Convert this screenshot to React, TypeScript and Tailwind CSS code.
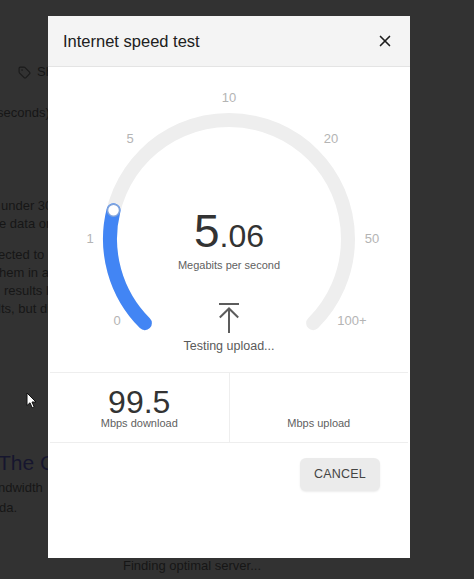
import React from "react";
import { Tag, X } from "lucide-react";

const CX = 181;
const CY = 172;
const R = 119;

// point on the gauge ring, angle in svg degrees (clockwise from +x)
const pt = (deg: number) => {
  const a = (deg * Math.PI) / 180;
  return [CX + R * Math.cos(a), CY + R * Math.sin(a)];
};

const Gauge = () => {
  const [sx, sy] = pt(135);
  const [ex, ey] = pt(405);
  const [kx, ky] = pt(194);

  const labels = [
    { t: "10", x: 181, y: 30 },
    { t: "5", x: 82, y: 71 },
    { t: "20", x: 283, y: 71 },
    { t: "1", x: 42, y: 171 },
    { t: "50", x: 324, y: 171 },
    { t: "0", x: 69, y: 253 },
    { t: "100+", x: 304, y: 253 },
  ];

  return (
    <svg className="absolute inset-0" width="362" height="305" viewBox="0 0 362 305">
      <path
        d={`M ${sx} ${sy} A ${R} ${R} 0 1 1 ${ex} ${ey}`}
        fill="none"
        stroke="#eeeeee"
        strokeWidth="14"
        strokeLinecap="round"
      />
      <path
        d={`M ${sx} ${sy} A ${R} ${R} 0 0 1 ${kx} ${ky}`}
        fill="none"
        stroke="#4285f4"
        strokeWidth="14"
        strokeLinecap="round"
      />
      <circle cx={kx} cy={ky} r="6" fill="#ffffff" stroke="#7fa3dc" strokeWidth="1.5" />
      {labels.map((l) => (
        <text
          key={l.t}
          x={l.x}
          y={l.y}
          textAnchor="middle"
          dominantBaseline="central"
          fontSize="13"
          fill="#b4b4b4"
          fontFamily="'Liberation Sans', Arial, sans-serif"
        >
          {l.t}
        </text>
      ))}
    </svg>
  );
};

const Cursor = () => (
  <svg width="12" height="17" viewBox="0 0 12 17" className="ml-[26px]">
    <path
      d="M1 1 L1 13.5 L4 10.8 L6.2 15.8 L8.2 14.9 L6 10 L10 10 Z"
      fill="#ffffff"
      stroke="#111111"
      strokeWidth="1"
      strokeLinejoin="round"
    />
  </svg>
);

export default function App() {
  return (
    <div className="relative w-[474px] h-[579px] overflow-hidden bg-[#323232] font-['Liberation_Sans',Arial,sans-serif]">
      {/* page behind the dialog */}
      <div className="flex flex-col text-[13px] text-[#161616] whitespace-nowrap">
        <div className="mt-[63px] h-[18px] flex items-center gap-[6px] ml-[18px]">
          <Tag size={13} strokeWidth={2} className="text-[#1a1a1a]" />
          <span>Share</span>
        </div>
        <p className="mt-[23px] h-[18px] leading-[18px] -ml-[3px]">seconds)</p>
        <p className="mt-[75px] h-[18px] leading-[18px] ml-[1px]">under 30 seconds</p>
        <p className="h-[18px] leading-[18px] -ml-[1px]">e data on</p>
        <p className="mt-[13px] h-[18px] leading-[18px] -ml-[2px]">ected to</p>
        <p className="h-[18px] leading-[18px] -ml-[1px]">hem in a</p>
        <p className="h-[18px] leading-[18px] ml-[4px]">results li</p>
        <p className="h-[18px] leading-[18px] -ml-[2px]">lts, but di</p>
        <div className="mt-[74px] h-[16px]">
          <Cursor />
        </div>
        <p className="mt-[42px] h-[26px] leading-[26px] text-[21px] text-[#16162e] -ml-[2px]">The Gl</p>
        <p className="mt-[3px] h-[18px] leading-[18px] -ml-[2px]">ndwidth</p>
        <p className="mt-[2px] h-[18px] leading-[18px] -ml-[1px]">da.</p>
        <p className="mt-[40px] h-[18px] leading-[18px] ml-[123px]">Finding optimal server...</p>
      </div>

      {/* dialog */}
      <div className="absolute left-[48px] top-[16px] w-[362px] h-[542px] bg-white flex flex-col">
        <div className="h-[51px] shrink-0 bg-[#f4f4f4] border-b border-[#e4e4e4] flex items-center justify-between pl-[15px] pr-[16px]">
          <span className="text-[16.5px] text-[#202020]">Internet speed test</span>
          <X size={18} strokeWidth={2.2} className="text-[#1e1e1e]" />
        </div>

        <div className="relative h-[305px] shrink-0">
          <Gauge />
          <div className="relative flex flex-col items-center pt-[141px]">
            <div className="flex items-baseline h-[46px] leading-[46px] text-[#333333]">
              <span className="text-[46px]">5</span>
              <span className="text-[32px]">.06</span>
            </div>
            <span className="mt-[4px] text-[11px] leading-[14px] text-[#5f5f5f]">
              Megabits per second
            </span>
            <svg className="mt-[31px]" width="22" height="30" viewBox="0 0 22 30">
              <path
                d="M1 1 H21 M11 5.5 V30 M1.8 14.5 L11 5.5 L20.2 14.5"
                fill="none"
                stroke="#5c5c5c"
                strokeWidth="2"
              />
            </svg>
            <span className="mt-[5px] text-[12.5px] leading-[16px] text-[#5a5a5a]">
              Testing upload...
            </span>
          </div>
        </div>

        <div className="mx-[2px] h-[71px] shrink-0 border-y border-[#eeeeee] flex">
          <div className="flex-1 border-r border-[#eeeeee] flex flex-col items-center pt-[14px]">
            <span className="text-[32px] leading-[30px] text-[#333333]">99.5</span>
            <span className="text-[11px] leading-[13px] text-[#5f5f5f]">Mbps download</span>
          </div>
          <div className="flex-1 flex flex-col items-center pt-[14px]">
            <span className="h-[30px]" />
            <span className="text-[11px] leading-[13px] text-[#5f5f5f]">Mbps upload</span>
          </div>
        </div>

        <div className="flex justify-end pr-[30px] pt-[15px]">
          <button className="w-[80px] h-[33px] rounded-[6px] bg-[#ebebeb] shadow-[0_1px_2px_rgba(0,0,0,0.08)] text-[12.5px] text-[#444444] tracking-[0.2px]">
            CANCEL
          </button>
        </div>
      </div>
    </div>
  );
}
